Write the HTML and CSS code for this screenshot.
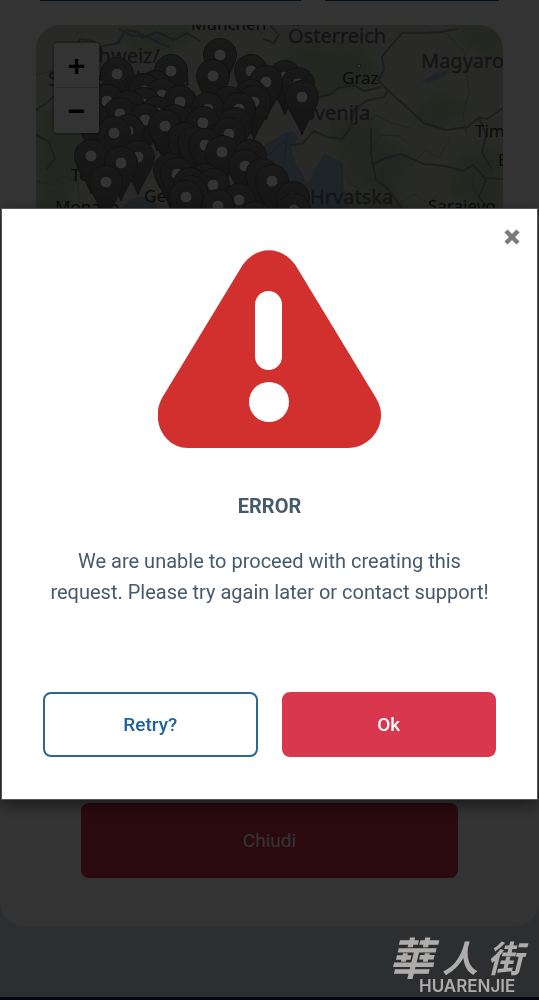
FILE: index.html
```html
<!doctype html>
<html lang="it">
<head>
<meta charset="UTF-8">
<title>Error</title>
<meta name="viewport" content="width=device-width,initial-scale=1">
<link rel="stylesheet" href="styles.css">
</head>

<body>
<main class="card">
 <div class="top-actions">
  <span class="action-edge wide"></span>
  <span class="action-edge"></span>
 </div>

 <div class="map">
  <svg class="map-canvas" viewBox="0 0 467 738" preserveAspectRatio="xMinYMin slice" xmlns="http://www.w3.org/2000/svg">
   <defs>
    <filter id="soft"><feGaussianBlur stdDeviation="5"/></filter>
    <linearGradient id="pin_fill" x1="0" y1="0" x2="0" y2="1">
     <stop offset="0" stop-color="#7e7e7e"/>
     <stop offset="1" stop-color="#666"/>
    </linearGradient>
    <g id="pin">
     <path d="M0 38C-4 25-16 12-16.500 0A16.500 16.500 0 0 1 16.500 0C16 12 4 25 0 38Z" fill="url(#pin_fill)" stroke="#565656"/>
     <circle r="6" fill="#fff" stroke="#666" stroke-width="1"/>
    </g>
   </defs>

   <rect width="467" height="738" fill="#ccd2c4"/>
   <!-- woodland -->
   <g fill="#b3c4a4" filter="url(#soft)">
    <path d="M0 90L35 70 55 120 30 190 0 200ZM75 0H160L150 24 100 30ZM250 15L330 20 345 55 290 75 245 50ZM290 95L340 90 350 125 300 135ZM420 0H467V40L430 22ZM400 65L440 80 410 105 370 95ZM325 100L380 130 360 175 300 155ZM420 130L467 120V190L410 170ZM300 165L365 170 410 235H320Z"/>
   </g>
   <!-- sea and lakes -->
   <g fill="#94b4c2">
    <path d="M229 118L238 115 247 108 257 106 264 114 255 122 260 139 272 158 279 144 289 128 297 133 306 137 307 164 313 179 323 195 340 225H265L244 180 234 165 228 145Z"/>
    <path d="M84 185Q98 165 117 174L126 190H84ZM386 56L400 48 414 44 407 52 392 58ZM120 11L128 15 118 18Z"/>
   </g>
   <path d="M263 111L272 118 278 126 275 142 270 150 263 134 257 121Z" fill="#c6ccb4"/>
   <!-- rivers -->
   <g fill="none" stroke="#8698b4" stroke-width="2">
    <path d="M0 85L9 79 16 73 25 68 37 58 50 55M83 4L96 11 108 10 121 17 134 22"/>
    <path d="M229 135L239 124 253 115M252 110L247 142M306 138V177" stroke-width="1"/>
   </g>
   <!-- regional lines -->
   <g fill="none" stroke="#ac9ca8" stroke-width="1">
    <path d="M0 156L16 160 27 151 42 157 43 176 56 184M0 50L20 45 35 50M270 14L280 19 290 12 307 20 330 10 343 20M331 99L340 90 355 98 374 103M331 126L346 110 363 111 372 118M374 142L390 125 402 133 414 115M310 156L323 164 335 154 352 161M330 185L345 174 360 182 377 169 392 178 404 168M410 8L429 28 433 68 427 90 431 111M433 134L440 145 436 158 443 174M360 130L346 142 347 156M280 65L292 71 300 64"/>
   </g>
   <!-- borders -->
   <g fill="none" stroke="#968a96" stroke-width="2">
    <path d="M39 24L44 14 57 16 63 22 82 18 90 5 102 7 106 13 121 7 138 15 151 8 164 16M234 0L243 10 238 18 227 14"/>
    <path d="M467 83L451 94 443 92 432 102 410 105 388 98 366 78 348 62 342 55 348 45 346 32 354 22 366 8H388L405 7 421 4"/>
    <path d="M353 64L348 72 330 76 318 85 314 104 306 114 291 112 278 106 266 119 255 120M280 73L295 69 302 63 318 60 328 66 345 62"/>
    <path d="M335 103V130L337 139 350 133 365 129 388 139 409 141 427 146 437 140 449 153 467 154M443 92L450 110 446 127 455 144"/>
    <path d="M337 139L340 155 354 166 364 181 376 197M450 154L443 172 455 188 467 194M0 110L13 117 19 133 10 145"/>
   </g>

   <g class="country">
    <text x="42" y="38">Schweiz/</text>
    <text x="12" y="61">Suisse/Svizzera</text>
    <text x="252" y="18">Österreich</text>
    <text x="385" y="43">Magyaro</text>
    <text x="262" y="95">lovenija</text>
    <text x="274" y="179">Hrvatska</text>
   </g>
   <g class="city">
    <text x="155" y="5">München</text>
    <text x="306" y="59">Graz</text>
    <text x="35" y="156">Torino</text>
    <text x="108" y="177">Genova</text>
    <text x="19" y="188">Monaco</text>
    <text x="439" y="112">Tim</text>
    <text x="462" y="141">B</text>
    <text x="392" y="187">Sarajevo</text>
   </g>
   <circle cx="323" cy="41" r="2" fill="#fff" stroke="#777"/>

   <g class="pins">
    <use href="#pin" x="184" y="30"/>
    <use href="#pin" x="135" y="46"/>
    <use href="#pin" x="215" y="46"/>
    <use href="#pin" x="81" y="49"/>
    <use href="#pin" x="249" y="52"/>
    <use href="#pin" x="177" y="51"/>
    <use href="#pin" x="230" y="57"/>
    <use href="#pin" x="262" y="59"/>
    <use href="#pin" x="119" y="62"/>
    <use href="#pin" x="106" y="65"/>
    <use href="#pin" x="109" y="66"/>
    <use href="#pin" x="215" y="71"/>
    <use href="#pin" x="266" y="72"/>
    <use href="#pin" x="126" y="70"/>
    <use href="#pin" x="71" y="76"/>
    <use href="#pin" x="144" y="77"/>
    <use href="#pin" x="193" y="78"/>
    <use href="#pin" x="218" y="77"/>
    <use href="#pin" x="108" y="79"/>
    <use href="#pin" x="92" y="82"/>
    <use href="#pin" x="172" y="84"/>
    <use href="#pin" x="203" y="84"/>
    <use href="#pin" x="121" y="88"/>
    <use href="#pin" x="84" y="89"/>
    <use href="#pin" x="56" y="93"/>
    <use href="#pin" x="109" y="95"/>
    <use href="#pin" x="138" y="96"/>
    <use href="#pin" x="167" y="98"/>
    <use href="#pin" x="199" y="99"/>
    <use href="#pin" x="129" y="101"/>
    <use href="#pin" x="92" y="106"/>
    <use href="#pin" x="78" y="108"/>
    <use href="#pin" x="193" y="109"/>
    <use href="#pin" x="148" y="114"/>
    <use href="#pin" x="158" y="118"/>
    <use href="#pin" x="169" y="120"/>
    <use href="#pin" x="186" y="127"/>
    <use href="#pin" x="214" y="131"/>
    <use href="#pin" x="102" y="132"/>
    <use href="#pin" x="55" y="131"/>
    <use href="#pin" x="85" y="138"/>
    <use href="#pin" x="209" y="141"/>
    <use href="#pin" x="134" y="145"/>
    <use href="#pin" x="141" y="149"/>
    <use href="#pin" x="226" y="150"/>
    <use href="#pin" x="236" y="156"/>
    <use href="#pin" x="169" y="155"/>
    <use href="#pin" x="154" y="159"/>
    <use href="#pin" x="70" y="157"/>
    <use href="#pin" x="177" y="160"/>
    <use href="#pin" x="155" y="167"/>
    <use href="#pin" x="150" y="172"/>
    <use href="#pin" x="257" y="173"/>
    <use href="#pin" x="203" y="175"/>
    <use href="#pin" x="182" y="181"/>
    <use href="#pin" x="258" y="185"/>
    <use href="#pin" x="219" y="193"/>
   </g>
  </svg>

  <div class="zoom">
   <button type="button" class="zoom-button" aria-label="Zoom in">+</button>
   <button type="button" class="zoom-button" aria-label="Zoom out">−</button>
  </div>
 </div>

 <button type="button" class="button close-page">Chiudi</button>
</main>

<footer class="footer"></footer>

<div class="overlay">
 <div class="modal" role="dialog" aria-modal="true" aria-labelledby="modal_title">
  <button type="button" class="modal-close" aria-label="Close">
   <svg width="18" height="18" viewBox="0 0 18 18"><path d="M3 3L15 15M15 3L3 15" stroke="#7b7b7b" stroke-width="4.500"/></svg>
  </button>
  <svg class="modal-icon" viewBox="0 0 224 198" xmlns="http://www.w3.org/2000/svg">
   <path d="M84 16C98 -5 124 -5 138 16L218 148C232 170 215 198 190 198H30C6 198 -8 170 4 148Z" fill="#d1302f"/>
   <rect x="97" y="41" width="27" height="79" rx="13.500" fill="#fff"/>
   <circle cx="111" cy="152" r="20" fill="#fff"/>
  </svg>
  <h1 class="modal-title" id="modal_title">ERROR</h1>
  <p class="modal-text">We are unable to proceed with creating this request. Please try again later or contact support!</p>
  <div class="modal-actions">
   <button type="button" class="button retry">Retry?</button>
   <button type="button" class="button ok">Ok</button>
  </div>
 </div>
</div>

<div class="watermark">
 <div class="watermark-cn" lang="zh-Hant"><span class="big">華</span><span>人</span><span>街</span></div>
 <div class="watermark-latin">HUARENJIE</div>
</div>
</body>
</html>
```
FILE: styles.css
```css
* {
    box-sizing: border-box;
}
body {
    display: flex;
    flex-direction: column;
    min-height: 100vh;
    margin: 0;
    background: #e1e6eb;
    font-family: Roboto, "Liberation Sans", sans-serif;
    color: #455a6b;
}
button {
    font-family: inherit;
    cursor: pointer;
}

/* page behind the dialog */
.card {
    padding: 0 36px 48px;
    border-radius: 0 0 24px 24px;
    background: #fff;
}
.top-actions {
    display: flex;
    gap: 24px;
    height: 1px;
    margin-bottom: 24px;
    padding: 0 4px;
}
.action-edge {
    flex: 2;
    background: #00508f;
}
.action-edge.wide {
    flex: 3;
}
.map {
    position: relative;
    height: 738px;
    overflow: hidden;
    border-radius: 24px;
}
.map-canvas {
    display: block;
    width: 100%;
    height: 100%;
}
.country {
    font: 20px "Noto Sans", sans-serif;
    fill: #6c5c72;
    stroke: #6c5c72;
    stroke-width: .3px;
}
.city {
    font: 17px "Noto Sans", sans-serif;
    fill: #333;
}
.zoom {
    position: absolute;
    top: 16px;
    left: 16px;
    display: flex;
    flex-direction: column;
    border: 2px solid rgba(0, 0, 0, .2);
    border-radius: 6px;
    background-clip: padding-box;
}
.zoom-button {
    width: 45px;
    height: 45px;
    padding: 0;
    border: 0;
    border-radius: 0 0 3px 3px;
    background: #fff;
    color: #000;
    font: bold 30px/45px "Liberation Sans", sans-serif;
}
.zoom-button:first-child {
    border-bottom: 1px solid #ccc;
    border-radius: 3px 3px 0 0;
}
.button {
    height: 65px;
    border: 0;
    border-radius: 8px;
    font-size: 19px;
    font-weight: 500;
}
.close-page {
    display: block;
    width: calc(100% - 90px);
    height: 75px;
    margin: 40px auto 0;
    background: #d2324b;
    color: #fff;
    font-weight: 400;
}
.footer {
    height: 3px;
    margin-top: auto;
    background: #002450;
}

/* dialog */
.overlay {
    position: fixed;
    inset: 0;
    display: flex;
    align-items: center;
    padding: 8px 1px 0;
    background: rgba(0, 0, 0, .8);
}
.modal {
    position: relative;
    display: flex;
    flex-direction: column;
    align-items: center;
    width: 100%;
    padding: 41px 41px 42px;
    border: 1px solid #555;
    background: #fff;
    box-shadow: 0 5px 15px rgba(0, 0, 0, .5);
}
.modal-close {
    position: absolute;
    top: 19px;
    right: 16px;
    width: 18px;
    height: 18px;
    padding: 0;
    border: 0;
    background: none;
}
.modal-close svg {
    display: block;
}
.modal-icon {
    width: 224px;
    height: 198px;
}
.modal-title {
    margin: 44px 0 0;
    font-size: 20px;
    font-weight: 700;
    line-height: 28px;
}
.modal-text {
    margin: 26px 0 0;
    font-size: 20px;
    line-height: 31px;
    text-align: center;
}
.modal-actions {
    display: flex;
    gap: 24px;
    width: 100%;
    margin-top: 84px;
}
.modal-actions .button {
    flex: 1;
    border: 2px solid #2c6791;
}
.modal-actions .retry {
    background: #fff;
    color: #1d629b;
}
.modal-actions .ok {
    border-color: #d9374e;
    background: #d9374e;
    color: #fff;
}

.watermark {
    position: fixed;
    right: 10px;
    bottom: 6px;
    width: 140px;
    color: #aeadab;
    pointer-events: none;
}
.watermark-cn {
    display: flex;
    align-items: center;
    justify-content: space-between;
    height: 44px;
    padding-right: 6px;
    font: italic bold 36px/44px "Noto Sans CJK TC", sans-serif;
}
.watermark-cn .big {
    font-size: 44px;
}
.watermark-latin {
    padding-left: 30px;
    font: 600 17px/16px Inter, sans-serif;
}
```
